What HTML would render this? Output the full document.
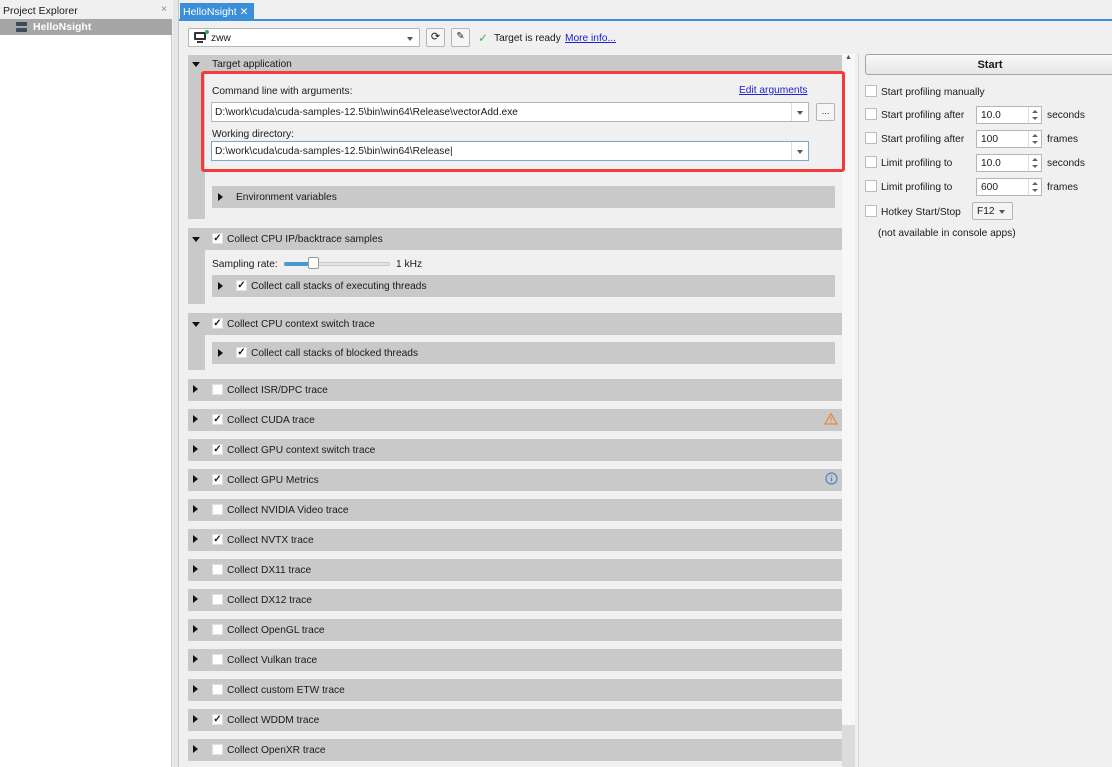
<!DOCTYPE html>
<html><head><meta charset="utf-8"><style>
*{box-sizing:border-box;margin:0;padding:0}
body{width:1112px;height:767px;overflow:hidden;background:#f0f0f0;font-family:"Liberation Sans",Arial,sans-serif;font-size:10.2px;color:#1a1a1a;position:relative}
.a{position:absolute}
.hdr{position:absolute;left:188px;width:654px;height:22px;background:#c9c9c9}
.sub{position:absolute;left:212px;width:623px;height:22px;background:#c9c9c9}
.tri{position:absolute;width:0;height:0;border-left:5px solid #111;border-top:4px solid transparent;border-bottom:4px solid transparent}
.trd{position:absolute;width:0;height:0;border-top:5px solid #111;border-left:4px solid transparent;border-right:4px solid transparent}
.cb{position:absolute;width:11px;height:11px;background:#fff;border:1px solid #e0e0e0;font-size:10px;line-height:10px;text-align:center;font-weight:bold}
.cbr{position:absolute;width:12px;height:12px;background:#fff;border:1px solid #bdbdbd}
.lbl{position:absolute;white-space:nowrap;padding-top:1px}
.inp{position:absolute;background:#fff;border:1px solid #b5b5b5;height:20px;padding:4px 3px;white-space:nowrap}
.spin{position:absolute;background:#fff;border:1px solid #b5b5b5;height:18px;width:66px;padding:3px 4px}
.spin:after{content:"";position:absolute;right:0;top:0;width:12px;height:16px;border-left:1px solid #ddd}
.spin:before{content:"";position:absolute;right:3px;top:3px;border-bottom:3px solid #666;border-left:3px solid transparent;border-right:3px solid transparent}
.spin i{position:absolute;right:3px;top:10px;border-top:3px solid #666;border-left:3px solid transparent;border-right:3px solid transparent}
.dd{position:absolute;right:0;top:0;width:17px;height:100%;border-left:1px solid #ddd}
.dd:after{content:"";position:absolute;left:5px;top:8px;border-top:4px solid #555;border-left:3px solid transparent;border-right:3px solid transparent}
a{color:#2020d0;text-decoration:underline}
</style></head><body>
<div class="a" style="left:0;top:0;width:172px;height:767px;background:#fff;border-right:1px solid #c8c8c8"></div>
<div class="a" style="left:0;top:0;width:172px;height:19px;background:#f0f0f0"></div>
<div class="lbl" style="left:3px;top:4px;font-size:10.5px">Project Explorer</div>
<div class="lbl" style="left:161px;top:3px;color:#888;font-size:10px">×</div>
<div class="a" style="left:0;top:19px;width:172px;height:16px;background:#a6a6a6"></div>
<div class="a" style="left:16px;top:22px;width:11px;height:4px;background:#3d4a5a;border-radius:1px"></div>
<div class="a" style="left:16px;top:28px;width:11px;height:4px;background:#3d4a5a;border-radius:1px"></div>
<div class="lbl" style="left:33px;top:20px;color:#fff;font-weight:bold;font-size:10.5px">HelloNsight</div>
<div class="a" style="left:173px;top:0;width:5px;height:767px;background:#e6e6e6"></div>
<div class="a" style="left:178px;top:0;width:1px;height:767px;background:#c8c8c8"></div>
<div class="a" style="left:180px;top:3px;width:74px;height:17px;background:#3a8fd6"></div>
<div class="lbl" style="left:183px;top:5px;color:#fff;font-size:10.5px">HelloNsight ✕</div>
<div class="a" style="left:179px;top:19px;width:933px;height:2px;background:#3a8fd6"></div>
<div class="inp" style="left:188px;top:28px;width:232px;height:19px;border-radius:2px;padding:4px 3px 3px 22px">zww<div class="dd" style="border:none"></div></div>
<div class="a" style="left:194px;top:32px;width:12px;height:8px;border:2px solid #333;border-radius:1px"></div>
<div class="a" style="left:197px;top:41px;width:6px;height:2px;background:#333"></div>
<div class="a" style="left:205px;top:30px;width:4px;height:4px;background:#2db34a;border-radius:2px"></div>
<div class="a" style="left:426px;top:28px;width:19px;height:19px;border:1px solid #b5b5b5;background:#f6f6f6;border-radius:2px;text-align:center;line-height:16px;font-size:11px">⟳</div>
<div class="a" style="left:451px;top:28px;width:19px;height:19px;border:1px solid #b5b5b5;background:#f6f6f6;border-radius:2px;text-align:center;line-height:16px;font-size:10px">✎</div>
<div class="lbl" style="left:478px;top:30px;color:#4caf50;font-size:12px">✓</div>
<div class="lbl" style="left:494px;top:32px">Target is ready</div>
<div class="lbl" style="left:565px;top:32px"><a>More info...</a></div>
<div class="a" style="left:842px;top:54px;width:13px;height:713px;background:#f7f7f7"></div>
<div class="lbl" style="left:845px;top:53px;font-size:7px;color:#555">▲</div>
<div class="a" style="left:842px;top:725px;width:13px;height:42px;background:#dcdcdc"></div>
<div class="a" style="left:858px;top:54px;width:1px;height:713px;background:#d8d8d8"></div>
<div class="a" style="left:865px;top:54px;width:250px;height:21px;border:1px solid #9aa6b2;border-radius:3px;background:linear-gradient(#f8f8f8,#e6e6e6);text-align:center;line-height:20px;font-weight:bold;font-size:11px">Start</div>
<div class="cbr" style="left:865px;top:85px"></div><div class="lbl" style="left:881px;top:86px">Start profiling manually</div>
<div class="cbr" style="left:865px;top:108px"></div><div class="lbl" style="left:881px;top:109px">Start profiling after</div><div class="spin" style="left:976px;top:106px">10.0<i></i></div><div class="lbl" style="left:1047px;top:109px">seconds</div>
<div class="cbr" style="left:865px;top:132px"></div><div class="lbl" style="left:881px;top:133px">Start profiling after</div><div class="spin" style="left:976px;top:130px">100<i></i></div><div class="lbl" style="left:1047px;top:133px">frames</div>
<div class="cbr" style="left:865px;top:156px"></div><div class="lbl" style="left:881px;top:157px">Limit profiling to</div><div class="spin" style="left:976px;top:154px">10.0<i></i></div><div class="lbl" style="left:1047px;top:157px">seconds</div>
<div class="cbr" style="left:865px;top:180px"></div><div class="lbl" style="left:881px;top:181px">Limit profiling to</div><div class="spin" style="left:976px;top:178px">600<i></i></div><div class="lbl" style="left:1047px;top:181px">frames</div>
<div class="cbr" style="left:865px;top:205px"></div><div class="lbl" style="left:881px;top:206px">Hotkey Start/Stop</div>
<div class="a" style="left:972px;top:202px;width:41px;height:18px;border:1px solid #b5b5b5;background:#f4f4f4;border-radius:2px;padding:3px 4px;white-space:nowrap">F12</div>
<div class="a" style="left:999px;top:210px;border-top:4px solid #555;border-left:3px solid transparent;border-right:3px solid transparent"></div>
<div class="lbl" style="left:878px;top:227px">(not available in console apps)</div>

<div class="hdr" style="top:55px;height:17px"></div>
<div class="trd" style="left:192px;top:62px"></div>
<div class="lbl" style="left:212px;top:58px">Target application</div>
<div class="a" style="left:188px;top:72px;width:17px;height:147px;background:#c9c9c9"></div>
<div class="a" style="left:201px;top:71px;width:644px;height:101px;border:3px solid #f23b3b;border-radius:3px"></div>
<div class="lbl" style="left:212px;top:85px">Command line with arguments:</div>
<div class="lbl" style="left:739px;top:84px"><a>Edit arguments</a></div>
<div class="inp" style="left:211px;top:102px;width:598px">D:\work\cuda\cuda-samples-12.5\bin\win64\Release\vectorAdd.exe<div class="dd"></div></div>
<div class="a" style="left:816px;top:103px;width:19px;height:18px;border:1px solid #b5b5b5;background:#f6f6f6;border-radius:2px;text-align:center;font-size:9px;line-height:14px">...</div>
<div class="lbl" style="left:212px;top:128px">Working directory:</div>
<div class="inp" style="left:211px;top:141px;width:598px;border-color:#7aa7cf">D:\work\cuda\cuda-samples-12.5\bin\win64\Release|<div class="dd"></div></div>
<div class="sub" style="top:186px"></div>
<div class="tri" style="left:218px;top:193px"></div>
<div class="lbl" style="left:236px;top:191px">Environment variables</div>

<div class="hdr" style="top:228px"></div>
<div class="trd" style="left:192px;top:237px"></div>
<div class="cb" style="left:212px;top:233px">✓</div>
<div class="lbl" style="left:227px;top:233px">Collect CPU IP/backtrace samples</div>
<div class="a" style="left:188px;top:250px;width:17px;height:54px;background:#c9c9c9"></div>
<div class="lbl" style="left:212px;top:258px">Sampling rate:</div>
<div class="a" style="left:284px;top:262px;width:106px;height:4px;background:#e4e4e4;border:1px solid #c8c8c8;border-radius:2px"></div>
<div class="a" style="left:284px;top:262px;width:26px;height:4px;background:#4a98cf;border-radius:2px"></div>
<div class="a" style="left:308px;top:257px;width:11px;height:12px;background:#fff;border:1px solid #999;border-radius:2px"></div>
<div class="lbl" style="left:396px;top:258px">1 kHz</div>
<div class="sub" style="top:275px"></div>
<div class="tri" style="left:218px;top:282px"></div>
<div class="cb" style="left:236px;top:280px">✓</div>
<div class="lbl" style="left:251px;top:280px">Collect call stacks of executing threads</div>

<div class="hdr" style="top:313px"></div>
<div class="trd" style="left:192px;top:322px"></div>
<div class="cb" style="left:212px;top:318px">✓</div>
<div class="lbl" style="left:227px;top:318px">Collect CPU context switch trace</div>
<div class="a" style="left:188px;top:335px;width:17px;height:35px;background:#c9c9c9"></div>
<div class="sub" style="top:342px"></div>
<div class="tri" style="left:218px;top:349px"></div>
<div class="cb" style="left:236px;top:347px">✓</div>
<div class="lbl" style="left:251px;top:347px">Collect call stacks of blocked threads</div>

<div class="hdr" style="top:379px"></div><div class="tri" style="left:193px;top:385px"></div><div class="cb" style="left:212px;top:384px"></div><div class="lbl" style="left:227px;top:384px">Collect ISR/DPC trace</div>
<div class="hdr" style="top:409px"></div><div class="tri" style="left:193px;top:415px"></div><div class="cb" style="left:212px;top:414px">✓</div><div class="lbl" style="left:227px;top:414px">Collect CUDA trace</div>
<svg class="a" style="left:824px;top:412px" width="14" height="13" viewBox="0 0 14 13"><path d="M7 1.5L13 12H1Z" fill="none" stroke="#e8874a" stroke-width="1.3" stroke-linejoin="round"/><path d="M7 5v3.5M7 9.8v1" stroke="#e8874a" stroke-width="1.2"/></svg>
<div class="hdr" style="top:439px"></div><div class="tri" style="left:193px;top:445px"></div><div class="cb" style="left:212px;top:444px">✓</div><div class="lbl" style="left:227px;top:444px">Collect GPU context switch trace</div>
<div class="hdr" style="top:469px"></div><div class="tri" style="left:193px;top:475px"></div><div class="cb" style="left:212px;top:474px">✓</div><div class="lbl" style="left:227px;top:474px">Collect GPU Metrics</div>
<svg class="a" style="left:825px;top:472px" width="13" height="13" viewBox="0 0 13 13"><circle cx="6.5" cy="6.5" r="5.5" fill="none" stroke="#4a88c7" stroke-width="1.2"/><path d="M6.5 5.5v4M6.5 3.3v1" stroke="#4a88c7" stroke-width="1.3"/></svg>
<div class="hdr" style="top:499px"></div><div class="tri" style="left:193px;top:505px"></div><div class="cb" style="left:212px;top:504px"></div><div class="lbl" style="left:227px;top:504px">Collect NVIDIA Video trace</div>
<div class="hdr" style="top:529px"></div><div class="tri" style="left:193px;top:535px"></div><div class="cb" style="left:212px;top:534px">✓</div><div class="lbl" style="left:227px;top:534px">Collect NVTX trace</div>
<div class="hdr" style="top:559px"></div><div class="tri" style="left:193px;top:565px"></div><div class="cb" style="left:212px;top:564px"></div><div class="lbl" style="left:227px;top:564px">Collect DX11 trace</div>
<div class="hdr" style="top:589px"></div><div class="tri" style="left:193px;top:595px"></div><div class="cb" style="left:212px;top:594px"></div><div class="lbl" style="left:227px;top:594px">Collect DX12 trace</div>
<div class="hdr" style="top:619px"></div><div class="tri" style="left:193px;top:625px"></div><div class="cb" style="left:212px;top:624px"></div><div class="lbl" style="left:227px;top:624px">Collect OpenGL trace</div>
<div class="hdr" style="top:649px"></div><div class="tri" style="left:193px;top:655px"></div><div class="cb" style="left:212px;top:654px"></div><div class="lbl" style="left:227px;top:654px">Collect Vulkan trace</div>
<div class="hdr" style="top:679px"></div><div class="tri" style="left:193px;top:685px"></div><div class="cb" style="left:212px;top:684px"></div><div class="lbl" style="left:227px;top:684px">Collect custom ETW trace</div>
<div class="hdr" style="top:709px"></div><div class="tri" style="left:193px;top:715px"></div><div class="cb" style="left:212px;top:714px">✓</div><div class="lbl" style="left:227px;top:714px">Collect WDDM trace</div>
<div class="hdr" style="top:739px"></div><div class="tri" style="left:193px;top:745px"></div><div class="cb" style="left:212px;top:744px"></div><div class="lbl" style="left:227px;top:744px">Collect OpenXR trace</div>
</body></html>
